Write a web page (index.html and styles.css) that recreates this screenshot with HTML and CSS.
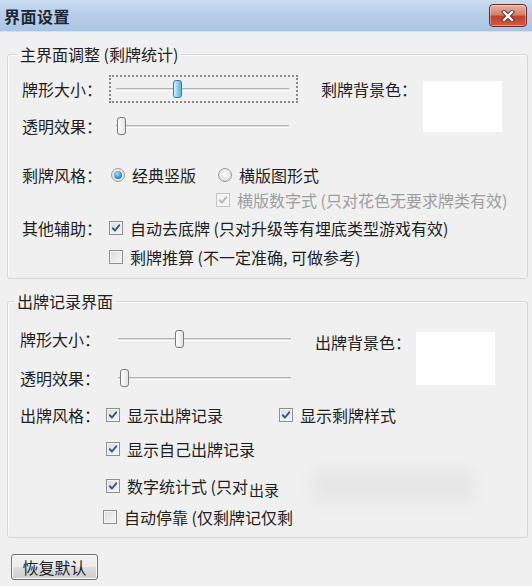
FILE: index.html
```html
<!DOCTYPE html>
<html lang="zh">
<head>
<meta charset="utf-8">
<title>界面设置</title>
<link rel="stylesheet" href="styles.css">
</head>
<body>
<div class="window">
  <div class="titlebar">
    <span class="title">界面设置</span>
    <button class="close" aria-label="关闭">
      <svg width="18" height="12" viewBox="0 0 18 12">
        <path d="M5 2 L13 10 M13 2 L5 10" stroke="#5a2a22" stroke-width="4.2" stroke-linecap="square" fill="none"/>
        <path d="M5 2 L13 10 M13 2 L5 10" stroke="#ffffff" stroke-width="2.4" stroke-linecap="square" fill="none"/>
      </svg>
    </button>
  </div>

  <div class="client">
    <fieldset class="group g1">
      <legend>主界面调整 (剩牌统计)</legend>
      <div class="top">
        <div class="sliders">
          <div class="row srow">
            <span class="label">牌形大小：</span>
            <div class="slider focus"><div class="track"></div><div class="thumb active" style="left:62px"></div></div>
          </div>
          <div class="row srow srow2">
            <span class="label">透明效果：</span>
            <div class="slider"><div class="track"></div><div class="thumb" style="left:6px"></div></div>
          </div>
        </div>
        <span class="colorlabel">剩牌背景色：</span>
        <div class="swatch"></div>
      </div>

      <div class="row r-radio">
        <span class="label">剩牌风格：</span>
        <label class="opt opt-a"><span class="radio on"></span>经典竖版</label>
        <label class="opt"><span class="radio"></span>横版图形式</label>
      </div>
      <div class="row r-dis">
        <span class="label"></span>
        <label class="opt disabled indent"><span class="check dis"><svg viewBox="0 0 13 13"><path d="M3 6.8 L5.4 9.2 L10 3.6" /></svg></span>横版数字式 (只对花色无要求牌类有效)</label>
      </div>
      <div class="row r-other">
        <span class="label">其他辅助：</span>
        <label class="opt"><span class="check"><svg viewBox="0 0 13 13"><path d="M3 6.8 L5.4 9.2 L10 3.6" /></svg></span>自动去底牌 (只对升级等有埋底类型游戏有效)</label>
      </div>
      <div class="row r-last">
        <span class="label"></span>
        <label class="opt"><span class="check"></span>剩牌推算 (不一定准确, 可做参考)</label>
      </div>
    </fieldset>

    <fieldset class="group g2">
      <legend>出牌记录界面</legend>
      <div class="top">
        <div class="sliders">
          <div class="row srow">
            <span class="label">牌形大小：</span>
            <div class="slider"><div class="track"></div><div class="thumb" style="left:62px"></div></div>
          </div>
          <div class="row srow srow2">
            <span class="label">透明效果：</span>
            <div class="slider"><div class="track"></div><div class="thumb" style="left:7px"></div></div>
          </div>
        </div>
        <span class="colorlabel">出牌背景色：</span>
        <div class="swatch"></div>
      </div>

      <div class="row r2-a">
        <span class="label">出牌风格：</span>
        <label class="opt opt-b"><span class="check"><svg viewBox="0 0 13 13"><path d="M3 6.8 L5.4 9.2 L10 3.6" /></svg></span>显示出牌记录</label>
        <label class="opt"><span class="check"><svg viewBox="0 0 13 13"><path d="M3 6.8 L5.4 9.2 L10 3.6" /></svg></span>显示剩牌样式</label>
      </div>
      <div class="row r2-b">
        <span class="label"></span>
        <label class="opt"><span class="check"><svg viewBox="0 0 13 13"><path d="M3 6.8 L5.4 9.2 L10 3.6" /></svg></span>显示自己出牌记录</label>
      </div>
      <div class="row r2-c">
        <span class="label"></span>
        <label class="opt"><span class="check"><svg viewBox="0 0 13 13"><path d="M3 6.8 L5.4 9.2 L10 3.6" /></svg></span>数字统计式 (只对<span class="wm">出录</span></label>
        <div class="smudge"></div>
      </div>
      <div class="row r2-d">
        <span class="label"></span>
        <label class="opt shift"><span class="check"></span>自动停靠 (仅剩牌记仅剩</label>
      </div>
    </fieldset>

    <div class="footer">
      <button class="btn">恢复默认</button>
    </div>
  </div>
</div>
</body>
</html>
```

FILE: styles.css
```css
* { box-sizing: border-box; }

html, body {
  margin: 0;
  padding: 0;
}

body {
  width: 532px;
  height: 586px;
  background: #f0f0f0;
  font-family: "Noto Sans CJK SC", "Noto Sans", sans-serif;
  font-size: 16px;
  color: #1e1e1e;
  overflow: hidden;
}

.window {
  width: 532px;
  height: 586px;
  display: flex;
  flex-direction: column;
}

.titlebar {
  height: 32px;
  flex: none;
  display: flex;
  align-items: center;
  padding: 0 5px 0 4px;
  background: linear-gradient(#cadcf0 0%, #b9d0ea 40%, #aac5e5 100%);
  border-bottom: 1px solid #d4e0ee;
}

.title {
  font-weight: bold;
  font-size: 16px;
  color: #1d2733;
  letter-spacing: 0.5px;
}

.close {
  margin-left: auto;
  width: 38px;
  height: 23px;
  padding: 0;
  border: 1px solid #6e2a22;
  border-radius: 4px;
  background: linear-gradient(#eab1a4 0%, #d9806b 45%, #c2412a 55%, #cf5b41 100%);
  display: flex;
  align-items: center;
  justify-content: center;
  box-shadow: inset 0 0 0 1px rgba(255,255,255,0.35);
}
.close svg { display: block; }

.client {
  padding: 0 4px 0 7px;
}

.group {
  margin: 12px 0 0;
  padding: 0;
  border: 1px solid #d3d8dd;
  border-radius: 3px;
  box-shadow: inset 1px 1px 0 #fbfbfb;
}

.group legend {
  padding: 0 3px;
  line-height: 20px;
  margin-left: 9px;
}
.g2 legend { margin-left: 6px; }

.row {
  display: flex;
  align-items: center;
}

.label {
  flex: none;
  width: 87px;
  white-space: nowrap;
}

.g1 .row { padding-left: 14px; }
.g2 .row { padding-left: 12px; }
.g2 .label { width: 86px; }

.top {
  display: flex;
  align-items: flex-start;
}
.g1 .top { margin-top: 10px; }
.g2 .top { margin-top: 13px; }

.srow { height: 30px; }
.srow2 { margin-top: 7px; }
.g2 .srow2 { margin-top: 9px; }

.slider {
  position: relative;
  width: 189px;
  height: 28px;
  border: 2px dotted transparent;
}
.slider.focus {
  border-color: #8a8a8a;
}
.g2 .slider { margin-left: 5px; }

.track {
  position: absolute;
  left: 5px;
  right: 7px;
  top: 11px;
  height: 3px;
  border-top: 1px solid #b4b4b4;
  border-bottom: 1px solid #ffffff;
  background: #dedede;
}

.thumb {
  position: absolute;
  top: 3px;
  width: 9px;
  height: 18px;
  border: 1px solid #7a7a7a;
  border-radius: 3px;
  background: linear-gradient(90deg, #fdfdfd, #e4e4e4);
}
.thumb.active {
  border-color: #3b7aa8;
  background: linear-gradient(90deg, #d7f0fb, #7ccbf0 60%, #5bb7e6);
}

.colorlabel {
  margin-left: 23px;
  line-height: 30px;
  white-space: nowrap;
}
.g2 .colorlabel { margin-left: 15px; margin-top: 3px; }

.swatch {
  flex: none;
  width: 79px;
  height: 51px;
  background: #fff;
  margin: 7px 0 0 6px;
}
.g2 .swatch { margin: 8px 0 0 5px; height: 53px; }

.opt {
  display: flex;
  align-items: center;
  white-space: nowrap;
}
.opt-a { width: 107px; }
.opt-b { width: 173px; }
.indent { margin-left: 107px; }
.shift { margin-left: -3px; }

.radio {
  flex: none;
  width: 14px;
  height: 14px;
  margin: 0 7px 0 2px;
  border-radius: 50%;
  border: 1px solid #9a9a9a;
  background: radial-gradient(circle at 50% 40%, #fbfbfb, #d7d7d7);
  position: relative;
}
.radio.on::after {
  content: "";
  position: absolute;
  left: 2px;
  top: 2px;
  width: 8px;
  height: 8px;
  border-radius: 50%;
  background: radial-gradient(circle at 40% 35%, #a8e0fb, #2a7fc4 70%, #1c5f9a);
}

.check {
  flex: none;
  width: 14px;
  height: 14px;
  margin-right: 7px;
  border: 1px solid #8e8f8f;
  background: linear-gradient(135deg, #dcdcdc, #f6f6f6);
  box-shadow: inset 0 0 0 1px #f4f4f4;
  display: flex;
}
.check svg {
  width: 12px;
  height: 12px;
}
.check path {
  fill: none;
  stroke: #2f4f9c;
  stroke-width: 2;
  stroke-linecap: round;
  stroke-linejoin: round;
}
.check.dis {
  border-color: #c4c4c4;
  background: #f4f4f4;
}
.check.dis path { stroke: #b4b4b4; }

.disabled { color: #9e9e9e; }

.r-radio { height: 26px; margin-top: 21px; }
.r-dis { height: 23px; }
.r-other { height: 30px; margin-top: 2px; }
.r-last { height: 28px; margin-bottom: 7px; }

.r2-a { height: 24px; margin-top: 10px; }
.r2-b { height: 24px; margin-top: 10px; }
.r2-c { height: 24px; margin-top: 13px; position: relative; }
.r2-d { height: 24px; margin-top: 7px; margin-bottom: 8px; }

.wm {
  font-size: 15px;
  margin-left: 1px;
  position: relative;
  top: 3px;
}

.smudge {
  position: absolute;
  left: 305px;
  top: -4px;
  width: 160px;
  height: 32px;
  background: #e6e6e6;
  filter: blur(7px);
}

.footer {
  margin-top: 16px;
  padding-left: 4px;
}

.btn {
  width: 87px;
  height: 26px;
  font-family: inherit;
  font-size: 16px;
  color: #222;
  padding: 0;
  border: 1px solid #707070;
  border-radius: 3px;
  background: linear-gradient(#f2f2f2 0%, #ebebeb 50%, #dddddd 51%, #cfcfcf 100%);
  box-shadow: inset 0 0 0 1px #fcfcfc;
  line-height: 22px;
}
```
